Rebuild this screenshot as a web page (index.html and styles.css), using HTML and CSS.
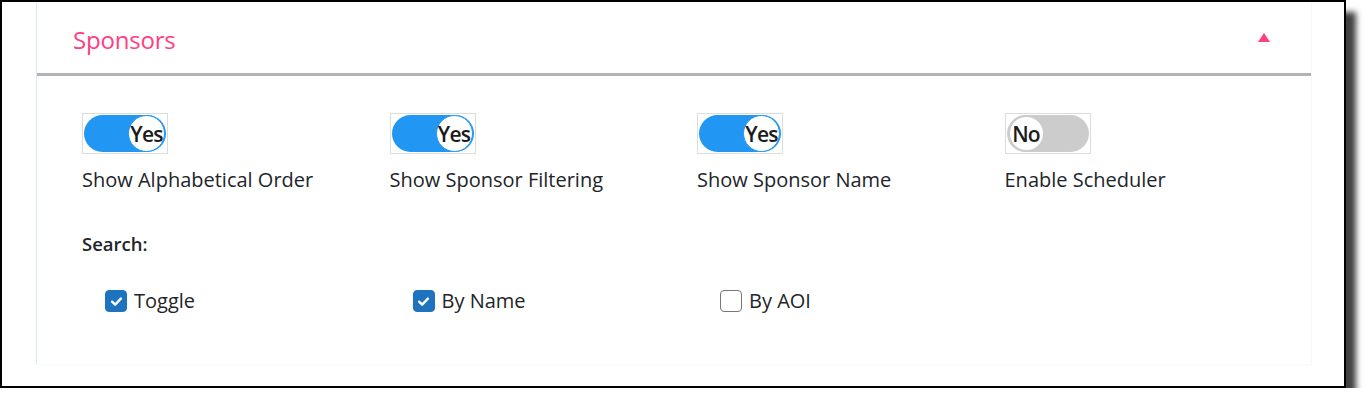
FILE: index.html
```html
<!DOCTYPE html>
<html lang="en">
<head>
<meta charset="utf-8">
<title>Sponsors</title>
<link rel="stylesheet" href="styles.css">
</head>
<body>
<div class="frame">
  <section class="card">
    <header class="card-head">
      <h2 class="card-title">Sponsors</h2>
      <span class="caret"></span>
    </header>
    <div class="card-body">
      <div class="toggles">
        <div class="opt">
          <span class="switch on"><span class="track"><span class="knob">Yes</span></span></span>
          <span class="opt-label">Show Alphabetical Order</span>
        </div>
        <div class="opt">
          <span class="switch on"><span class="track"><span class="knob">Yes</span></span></span>
          <span class="opt-label">Show Sponsor Filtering</span>
        </div>
        <div class="opt">
          <span class="switch on"><span class="track"><span class="knob">Yes</span></span></span>
          <span class="opt-label">Show Sponsor Name</span>
        </div>
        <div class="opt">
          <span class="switch off"><span class="track"><span class="knob">No</span></span></span>
          <span class="opt-label">Enable Scheduler</span>
        </div>
      </div>
      <div class="search-title">Search:</div>
      <div class="checks">
        <label class="check"><span class="box checked"><svg viewBox="0 0 20 20" width="17" height="17"><path d="M4.8 10.2 L8.4 13.6 L15.2 6.6" fill="none" stroke="#fff" stroke-width="2.8" stroke-linecap="round" stroke-linejoin="round"/></svg></span>Toggle</label>
        <label class="check"><span class="box checked"><svg viewBox="0 0 20 20" width="17" height="17"><path d="M4.8 10.2 L8.4 13.6 L15.2 6.6" fill="none" stroke="#fff" stroke-width="2.8" stroke-linecap="round" stroke-linejoin="round"/></svg></span>By Name</label>
        <label class="check"><span class="box"></span>By AOI</label>
      </div>
    </div>
  </section>
</div>
</body>
</html>
```

FILE: styles.css
```css
html, body {
  margin: 0;
  padding: 0;
  background: #ffffff;
}
body {
  font-family: "Open Sans", "Noto Sans", "Liberation Sans", sans-serif;
  color: #212529;
}
.frame {
  box-sizing: border-box;
  width: 1346px;
  height: 388px;
  border: 2px solid #000;
  background: #fff;
  overflow: hidden;
  box-shadow: 10px 12px 6px rgba(0, 0, 0, 0.75);
}
.card {
  box-sizing: border-box;
  margin-left: 34px;
  width: 1276px;
  height: 363px;
  border-left: 1px solid #dde9f6;
  border-bottom: 1px solid #f4f8fc;
  border-right: 1px solid #f4f8fc;
  border-bottom-right-radius: 3px;
}
.card-head {
  box-sizing: border-box;
  height: 74px;
  border-bottom: 3px solid #b3b3b3;
  display: flex;
  align-items: center;
  justify-content: space-between;
  padding: 0 41px 0 36px;
}
.card-title {
  margin: 0;
  font-size: 24px;
  font-weight: 400;
  color: #ff4081;
  letter-spacing: -0.2px;
  margin-top: 3px;
}
.caret {
  width: 0;
  height: 0;
  border-left: 6px solid transparent;
  border-right: 6px solid transparent;
  border-bottom: 9px solid #ff4081;
  margin-top: -1px;
}
.card-body {
  padding: 37px 0 0 45px;
}
.toggles {
  display: grid;
  grid-template-columns: repeat(4, 307.5px);
}
.opt {
  display: flex;
  flex-direction: column;
  align-items: flex-start;
}
.switch {
  display: inline-block;
  border: 1px solid #dcdcdc;
  padding: 1px;
}
.track {
  box-sizing: border-box;
  display: flex;
  align-items: center;
  width: 82px;
  height: 37px;
  border-radius: 19px;
  padding: 0 1px;
}
.switch.on .track {
  background: #2196f3;
  justify-content: flex-end;
}
.switch.off .track {
  background: #cccccc;
  justify-content: flex-start;
}
.knob {
  box-sizing: border-box;
  width: 37px;
  height: 37px;
  border-radius: 50%;
  background: #fff;
  display: flex;
  align-items: center;
  justify-content: center;
  font-size: 21px;
  font-weight: 600;
  color: #1b1b1b;
  letter-spacing: -0.8px;
}
.switch.on .knob {
  border: 1.5px solid #2196f3;
}
.switch.off .knob {
  border: 2px solid #cccccc;
}
.opt-label {
  margin-top: 13px;
  font-size: 20px;
  line-height: 26px;
}
.search-title {
  margin-top: 39px;
  font-size: 18.5px;
  font-weight: 600;
  line-height: 24px;
}
.checks {
  display: grid;
  grid-template-columns: repeat(3, 307.5px);
  margin-top: 32px;
  padding-left: 23px;
}
.check {
  display: flex;
  align-items: center;
  font-size: 20px;
  line-height: 26px;
}
.box {
  box-sizing: border-box;
  width: 22px;
  height: 22px;
  border-radius: 4px;
  border: 1.5px solid #767676;
  background: #fff;
  margin-right: 7px;
  display: flex;
  align-items: center;
  justify-content: center;
}
.box.checked {
  background: #1e73be;
  border-color: #1e73be;
}
```
